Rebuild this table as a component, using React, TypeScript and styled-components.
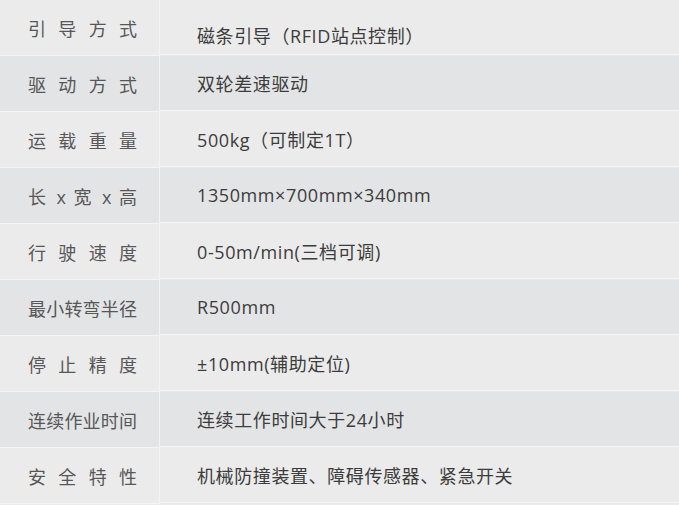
import React from "react";
import styled, { createGlobalStyle } from "styled-components";

const GlobalStyle = createGlobalStyle`
  html, body {
    margin: 0;
    padding: 0;
    background: #ebebeb;
  }
  body {
    font-family: "Open Sans", "Noto Sans CJK SC", sans-serif;
  }
`;

const Table = styled.div`
  width: 679px;
  display: grid;
  grid-template-columns: 160px 1fr;
`;

const Row = styled.div<{ $alt: boolean }>`
  display: contents;

  & > div {
    background: ${(p) => (p.$alt ? "#e3e4e6" : "#ebebeb")};
    border-bottom: 1px solid #f4f4f4;
    height: 55px;
    display: flex;
    align-items: center;
  }
`;

const Label = styled.div`
  padding-left: 28px;
  border-right: 1px solid #f4f4f4;
`;

const LabelText = styled.span`
  display: block;
  width: 109px;
  font-size: 18px;
  color: #575757;
  text-align: justify;
  text-align-last: justify;
`;

const Value = styled.div<{ $offset?: number }>`
  padding-left: 37px;
  padding-top: ${(p) => p.$offset ?? 0}px;
  box-sizing: border-box;
  font-size: 18px;
  letter-spacing: 0.6px;
  color: #3c3c3c;
  white-space: nowrap;
`;

const specs = [
  { label: "引导方式", value: "磁条引导（RFID站点控制）" },
  { label: "驱动方式", value: "双轮差速驱动" },
  { label: "运载重量", value: "500kg（可制定1T）" },
  { label: "长 x 宽 x 高", value: "1350mm×700mm×340mm" },
  { label: "行驶速度", value: "0-50m/min(三档可调)" },
  { label: "最小转弯半径", value: "R500mm" },
  { label: "停止精度", value: "±10mm(辅助定位)" },
  { label: "连续作业时间", value: "连续工作时间大于24小时" },
  { label: "安全特性", value: "机械防撞装置、障碍传感器、紧急开关" },
];

const App = () => {
  return (
    <>
      <GlobalStyle />
      <Table>
        {specs.map((s, i) => (
          <Row key={s.label} $alt={i % 2 === 1}>
            <Label>
              <LabelText>{s.label}</LabelText>
            </Label>
            <Value $offset={i === 0 ? 16 : 0}>{s.value}</Value>
          </Row>
        ))}
      </Table>
    </>
  );
};

export default App;
